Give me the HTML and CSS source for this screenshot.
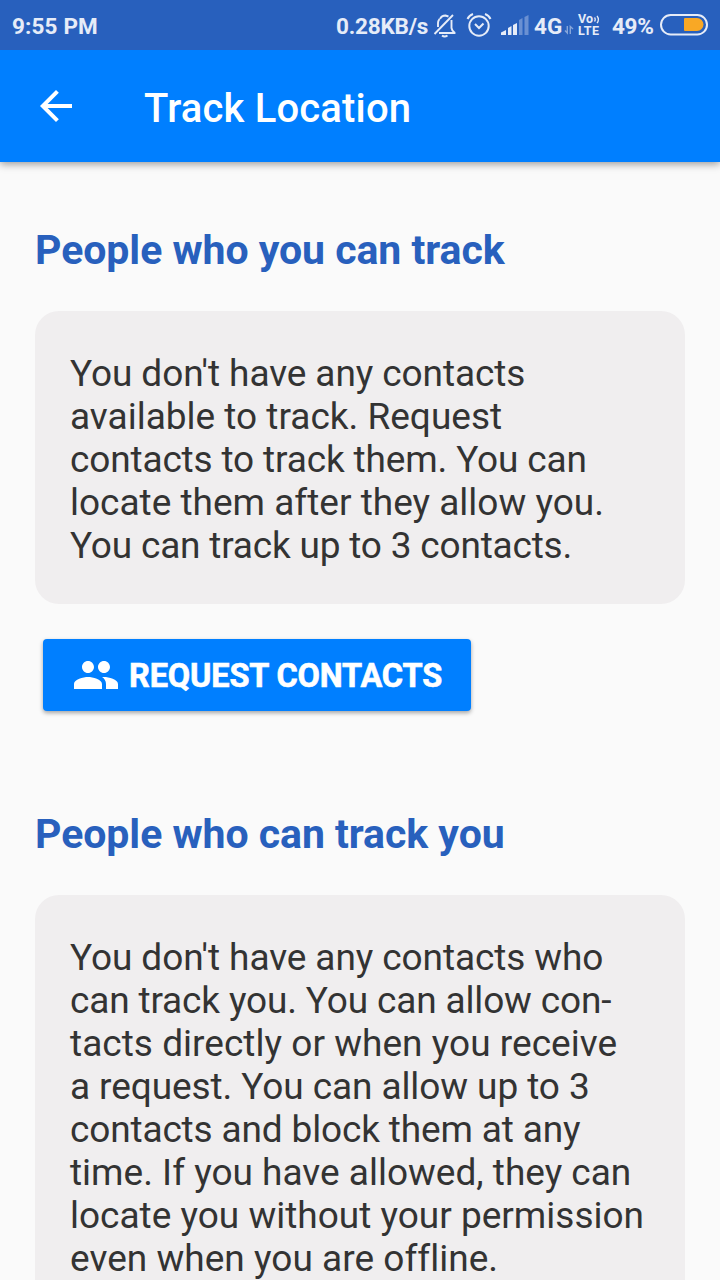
FILE: index.html
```html
<!DOCTYPE html>
<html lang="en">
<head>
<meta charset="utf-8">
<title>Track Location</title>
<link rel="stylesheet" href="styles.css">
</head>
<body>
<div class="status">
  <span class="clock">9:55 PM</span>
  <div class="indicators">
    <span class="speed">0.28KB/s</span>
    <svg class="bell" width="24" height="26" viewBox="0 0 24 26" fill="none" stroke="currentColor" stroke-width="1.9">
      <path d="M1.500 22 20 3M7 7Q8.500 3.500 12.500 3.500L15.500 4.500M5 15V11Q5 9 6.500 7M18.500 8V16Q19 19 21.500 20.500V21H6"/>
      <path d="M9 23.500Q11.500 25.500 14.500 23.500"/>
    </svg>
    <svg class="alarm" width="26" height="26" viewBox="0 0 26 26" fill="none" stroke="currentColor" stroke-width="2">
      <circle cx="13" cy="14" r="9.700"/>
      <path d="m9 12 4 4 4.500-4.500M1.500 7Q3 3.500 7 2M19 2Q23 3.500 24.500 7"/>
    </svg>
    <svg class="signal" width="28" height="22" viewBox="0 0 28 22" fill="currentColor">
      <path d="M0 21v-2.500l5-2.500v5zM7 21v-7l3.500-2v9zM12 21v-10l4-2v12z"/>
      <path opacity=".35" d="M18 21V6l3.500-2v17zM23.500 21V3l4-2v20z"/>
    </svg>
    <span class="network">4G</span>
    <svg class="arrows" width="10" height="10" viewBox="0 0 10 10" fill="none" stroke="currentColor" stroke-width="1.400" opacity=".5">
      <path d="M1 5.500 3.300 8V1M9 4 6.300 1.500V9"/>
    </svg>
    <div class="volte">
      <span class="vo">Vo<svg width="6" height="9" viewBox="0 0 6 9" fill="none" stroke="currentColor" stroke-width="1.300"><path d="M.5 2.500Q2 4.500 .5 6.500M3 .8Q5.800 4.500 3 8.200"/></svg></span>
      <span class="lte">LTE</span>
    </div>
    <span class="percent">49%</span>
    <svg class="battery" width="48" height="22" viewBox="0 0 48 22">
      <rect x="1" y="1" width="46" height="19.500" rx="9.700" fill="none" stroke="currentColor" stroke-width="2"/>
      <path d="M25 4H37a6.500 6.500 0 0 1 0 13H25q-1 0-1-1v-11q0-1 1-1z" fill="#f9a825"/>
    </svg>
  </div>
</div>
<header class="toolbar">
  <svg class="back" width="48" height="48" viewBox="0 0 24 24" fill="currentColor"><path d="M20 11H7.830l5.590-5.590L12 4l-8 8 8 8 1.410-1.410L7.830 13H20v-2z"/></svg>
  <h1 class="title">Track Location</h1>
</header>
<main class="content">
  <section class="section">
    <h2 class="heading">People who you can track</h2>
    <p class="card"><span class="snug">You don't have any contacts</span><br>available to track. Request<br><span class="tight">contacts to track them. You can</span><br>locate them after they allow you.<br><span class="tighter">You can track up to 3 contacts.</span></p>
    <button class="request" type="button">
      <svg class="people" width="48" height="48" viewBox="0 0 24 24" fill="currentColor"><path d="M16 11c1.660 0 2.990-1.340 2.990-3S17.660 5 16 5s-3 1.340-3 3 1.340 3 3 3zm-8 0c1.660 0 2.990-1.340 2.990-3S9.660 5 8 5 5 6.340 5 8s1.340 3 3 3zm0 2c-2.330 0-7 1.170-7 3.500V19h14v-2.500c0-2.330-4.670-3.500-7-3.500zm8 0c-.29 0-.62.02-.97.05 1.160.84 1.970 1.970 1.970 3.450V19h6v-2.500c0-2.330-4.670-3.500-7-3.500z"/></svg>
      <span class="request-label">REQUEST CONTACTS</span>
    </button>
  </section>
  <section class="section">
    <h2 class="heading">People who can track you</h2>
    <p class="card"><span class="snug">You don't have any contacts who</span><br><span class="tight">can track you. You can allow con-</span><br><span class="loose">tacts directly or when you receive</span><br><span class="snug">a request. You can allow up to 3</span><br><span class="tight">contacts and block them at any</span><br>time. If you have allowed, they can<br>locate you without your permission<br><span class="loose">even when you are offline.</span></p>
  </section>
</main>
</body>
</html>
```
FILE: styles.css
```css
* { box-sizing: border-box; }
body {
  margin: 0;
  height: 1280px;
  overflow: hidden;
  display: flex;
  flex-direction: column;
  background: #fafafa;
  color: #333;
  font-family: Roboto, sans-serif;
}
svg { display: block; flex: none; }
.status {
  flex: none;
  position: relative;
  z-index: 1;
  height: 50px;
  padding: 0 12px;
  display: flex;
  justify-content: space-between;
  background: #2860bd;
  color: #e6ecf8;
  font-size: 22.5px;
  font-weight: 700;
  line-height: 53px;
  white-space: nowrap;
}
.clock { letter-spacing: .15px; }
.indicators { display: flex; align-items: flex-start; }
.speed { width: 97px; letter-spacing: -.2px; }
.bell { margin: 12px 9px 0 0; }
.alarm { margin: 12px 9px 0 0; }
.signal { margin: 14px 5px 0 0; }
.network { width: 30px; }
.arrows { margin: 25px 4px 0 0; }
.volte {
  width: 34px;
  padding-top: 13px;
  display: flex;
  flex-direction: column;
  font-size: 12.5px;
  line-height: 12px;
}
.vo { height: 12px; display: flex; align-items: center; gap: 1px; }
.lte { letter-spacing: .4px; }
.percent { width: 48px; letter-spacing: -.3px; }
.battery { margin-top: 14px; }
.toolbar {
  flex: none;
  position: relative;
  height: 112px;
  padding-left: 32px;
  display: flex;
  align-items: center;
  background: #007fff;
  color: #fff;
  box-shadow: 0 2px 8px rgba(0, 0, 0, .4);
}
.title {
  margin: 6px 0 0 64px;
  font-size: 40px;
  font-weight: 500;
  line-height: 48px;
  letter-spacing: .17px;
}
.content {
  flex: 1;
  min-height: 0;
  overflow: hidden;
  padding: 64px 35px 0;
}
.heading {
  margin: 0 0 37px;
  color: #2860bd;
  font-size: 41px;
  font-weight: 700;
  line-height: 48px;
  letter-spacing: -.04px;
  white-space: nowrap;
}
.section + .section { margin-top: 99px; }
.card {
  margin: 0;
  padding: 41px 35px 37px;
  border-radius: 24px;
  background: #f0eeef;
  font-size: 37px;
  line-height: 43px;
  font-variant-ligatures: none;
  white-space: nowrap;
}
.snug { letter-spacing: -.09px; }
.tight { letter-spacing: -.15px; }
.tighter { letter-spacing: -.19px; }
.loose { letter-spacing: .03px; }
.request {
  width: 428px;
  height: 72px;
  margin: 35px 0 0 8px;
  padding: 0 0 0 29px;
  display: flex;
  align-items: center;
  gap: 9px;
  border: 0;
  border-radius: 4px;
  background: #007fff;
  box-shadow: 0 2px 4px rgba(0, 0, 0, .35);
  color: #fff;
  font: 700 32.5px/40px Roboto, sans-serif;
  white-space: nowrap;
}
.request-label {
  margin-top: 2px;
  letter-spacing: -.15px;
  -webkit-text-stroke: .6px currentColor;
}
```
